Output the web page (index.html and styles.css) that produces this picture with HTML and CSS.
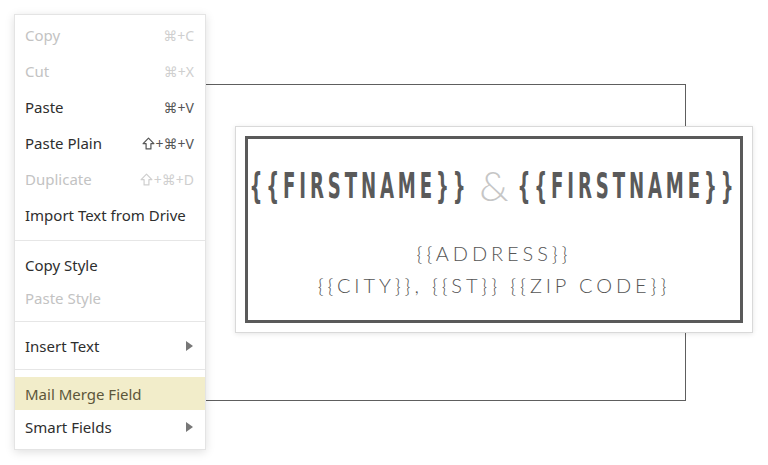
FILE: index.html
```html
<!DOCTYPE html>
<html>
<head>
<meta charset="utf-8">
<link rel="stylesheet" href="styles.css">
</head>
<body>
<div class="stage">
  <div class="frame"></div>
  <div class="card">
    <div class="card-inner">
      <div class="names">
        <span class="field"><span class="field-text">{{FIRSTNAME}}</span></span>
        <span class="amp">&amp;</span>
        <span class="field"><span class="field-text">{{FIRSTNAME}}</span></span>
      </div>
      <div class="address">
        <div>{{ADDRESS}}</div>
        <div>{{CITY}}, {{ST}} {{ZIP CODE}}</div>
      </div>
    </div>
  </div>
  <div class="menu">
    <div class="group first">
      <div class="item disabled"><span>Copy</span><span class="key">⌘+C</span></div>
      <div class="item disabled"><span>Cut</span><span class="key">⌘+X</span></div>
      <div class="item"><span>Paste</span><span class="key">⌘+V</span></div>
      <div class="item"><span>Paste Plain</span><span class="key"><svg class="shift" viewBox="0 0 14 14"><path d="M7 1.2 L12.8 7.2 H9.6 V12.8 H4.4 V7.2 H1.2 Z"/></svg>+⌘+V</span></div>
      <div class="item disabled"><span>Duplicate</span><span class="key"><svg class="shift" viewBox="0 0 14 14"><path d="M7 1.2 L12.8 7.2 H9.6 V12.8 H4.4 V7.2 H1.2 Z"/></svg>+⌘+D</span></div>
      <div class="item"><span>Import Text from Drive</span></div>
    </div>
    <div class="group">
      <div class="item"><span>Copy Style</span></div>
      <div class="item disabled"><span>Paste Style</span></div>
    </div>
    <div class="group">
      <div class="item"><span>Insert Text</span><span class="arrow"></span></div>
    </div>
    <div class="group last">
      <div class="item active"><span>Mail Merge Field</span></div>
      <div class="item"><span>Smart Fields</span><span class="arrow"></span></div>
    </div>
  </div>
</div>
</body>
</html>
```
FILE: styles.css
```css
html, body {
  margin: 0;
  padding: 0;
  background: #fff;
}
.stage {
  position: relative;
  width: 768px;
  height: 465px;
  overflow: hidden;
  padding: 14px 0 0 14px;
  box-sizing: border-box;
}
.frame {
  position: absolute;
  left: 120px;
  top: 84px;
  width: 566px;
  height: 317px;
  border: 1px solid #5e5e5e;
  box-sizing: border-box;
}
.card {
  position: absolute;
  left: 235px;
  top: 126px;
  width: 518px;
  height: 207px;
  background: #fff;
  border: 1px solid #d9d9d9;
  box-shadow: 0 1px 5px rgba(0,0,0,0.10);
  box-sizing: border-box;
  padding: 9px;
}
.card-inner {
  height: 100%;
  border: 3px solid #5a5a5a;
  box-sizing: border-box;
  display: flex;
  flex-direction: column;
  align-items: center;
  color: #5a5a5a;
}
.names {
  display: flex;
  align-items: center;
  justify-content: center;
  gap: 10px;
  margin-top: 26px;
  height: 40px;
}
.field {
  width: 218px;
  display: flex;
  justify-content: center;
  white-space: nowrap;
}
.field-text {
  flex: none;
  font-family: "DejaVu Sans Condensed", "DejaVu Sans", sans-serif;
  font-weight: bold;
  font-size: 36px;
  letter-spacing: 6.9px;
  color: #5a5a5a;
  transform: scaleX(0.56);
  transform-origin: center center;
}
.amp {
  width: 30px;
  text-align: center;
  font-family: Lato, sans-serif;
  font-weight: 300;
  font-size: 42px;
  color: #c6c6c6;
  line-height: 40px;
}
.address {
  margin-top: 32px;
  font-family: Lato, sans-serif;
  font-weight: 300;
  font-size: 20px;
  letter-spacing: 3.9px;
  line-height: 32px;
  text-align: center;
  color: #555;
}
.menu {
  position: relative;
  width: 192px;
  background: #fff;
  border: 1px solid #e4e4e4;
  box-shadow: 0 2px 9px rgba(0,0,0,0.13);
  box-sizing: border-box;
  font-family: "Noto Sans", "DejaVu Sans", sans-serif;
  font-size: 15px;
  color: #2e2e2e;
}
.group {
  padding: 7px 0;
  border-bottom: 1px solid #e6e6e6;
}
.group.first { padding-top: 2px; }
.group.last { border-bottom: none; padding-bottom: 6px; }
.item {
  height: 33px;
  display: flex;
  align-items: center;
  justify-content: space-between;
  padding: 0 11px 0 10px;
}
.group.first .item { height: 36px; }
.item.disabled { color: #c3c3c3; }
.key {
  display: flex;
  align-items: center;
  font-family: "Noto Sans", "DejaVu Sans", sans-serif;
  font-size: 14px;
  color: #555;
}
.shift {
  width: 13px;
  height: 13px;
  margin-right: 1px;
  fill: none;
  stroke: currentColor;
  stroke-width: 1.3;
  stroke-linejoin: round;
}
.item.disabled .key { color: #cfcfcf; }
.item.active {
  background: #f2edca;
  color: #5c563a;
}
.arrow {
  width: 0;
  height: 0;
  border-top: 5px solid transparent;
  border-bottom: 5px solid transparent;
  border-left: 7px solid #777;
  margin-right: 1px;
}
```
